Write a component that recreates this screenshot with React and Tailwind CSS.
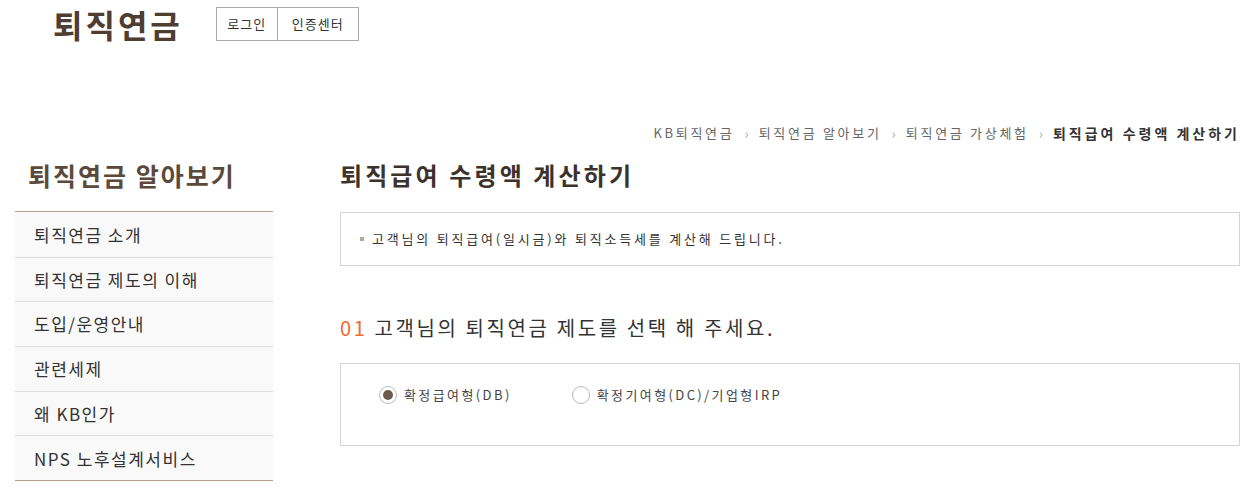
import React from "react";

const font = { fontFamily: '"Noto Sans CJK KR", "Noto Sans", sans-serif' };

function Chevron() {
  return <span className="mx-[10px] text-[14px] leading-[20px] tracking-normal text-[#aaa]">›</span>;
}

function Radio({ checked, label }) {
  return (
    <label className="flex items-center gap-[7px]">
      <span className="flex h-[18px] w-[18px] items-center justify-center rounded-full border border-[#bbb] bg-white">
        {checked && <span className="h-[10px] w-[10px] rounded-full bg-[#6b5a4e]" />}
      </span>
      <span className="text-[13px] tracking-[2.4px] text-[#444]">{label}</span>
    </label>
  );
}

export default function App() {
  const menu = ["퇴직연금 소개", "퇴직연금 제도의 이해", "도입/운영안내", "관련세제", "왜 KB인가", "NPS 노후설계서비스"];
  return (
    <div className="h-[491px] w-[1256px] overflow-hidden bg-white" style={font}>
      <header className="flex items-start pl-[53px] pt-[7px]">
        <div className="mt-[-1px] text-[32px] font-bold leading-[36px] tracking-[3px] text-[#4e3d31]">퇴직연금</div>
        <div className="ml-[33px] flex h-[34px] border border-[#aaa] text-[13px] tracking-[1px] text-[#333]">
          <span className="flex w-[61px] items-center justify-center border-r border-[#aaa]">로그인</span>
          <span className="flex w-[80px] items-center justify-center">인증센터</span>
        </div>
      </header>
      <div className="mt-[81px] flex items-center justify-end pr-[16px] text-[13px] leading-[20px] tracking-[2.7px] text-[#666]">
        <span>KB퇴직연금</span>
        <Chevron />
        <span>퇴직연금 알아보기</span>
        <Chevron />
        <span>퇴직연금 가상체험</span>
        <Chevron />
        <span className="text-[14px] font-bold tracking-[3px] text-[#333]">퇴직급여 수령액 계산하기</span>
      </div>
      <div className="mt-[12px] flex">
        <aside className="ml-[15px] w-[258px]">
          <h2 className="ml-[13px] h-[56px] text-[25px] font-bold leading-[40px] tracking-[2px] text-[#5b4a3c]">퇴직연금 알아보기</h2>
          <ul className="border-y border-[#b9a08a]">
            {menu.map((m, i) => (
              <li
                key={m}
                className={`flex h-[44.7px] items-center bg-[#f9f9f9] pl-[19px] text-[17px] tracking-[1.5px] text-[#333] ${i > 0 ? "border-t border-[#ddd]" : ""}`}
              >
                {m}
              </li>
            ))}
          </ul>
        </aside>
        <main className="ml-[67px] w-[900px]">
          <h1 className="h-[57px] text-[24px] font-bold leading-[40px] tracking-[3.1px] text-[#3b322c]">퇴직급여 수령액 계산하기</h1>
          <div className="flex h-[54px] items-center border border-[#d5d5d5] pl-[19px] text-[13px] tracking-[2.8px] text-[#333]">
            <span className="mr-[8px] h-[4px] w-[4px] bg-[#b8a898]" />
            고객님의 퇴직급여(일시금)와 퇴직소득세를 계산해 드립니다.
          </div>
          <h3 className="mt-[48px] h-[49px] text-[20px] leading-[28px] tracking-[2.6px] text-[#333]">
            <span className="text-[#f26a2e]">01</span> 고객님의 퇴직연금 제도를 선택 해 주세요.
          </h3>
          <div className="flex h-[83px] items-start gap-[60px] border border-[#d5d5d5] pl-[38px] pt-[21px]">
            <Radio checked label="확정급여형(DB)" />
            <Radio label="확정기여형(DC)/기업형IRP" />
          </div>
        </main>
      </div>
    </div>
  );
}
